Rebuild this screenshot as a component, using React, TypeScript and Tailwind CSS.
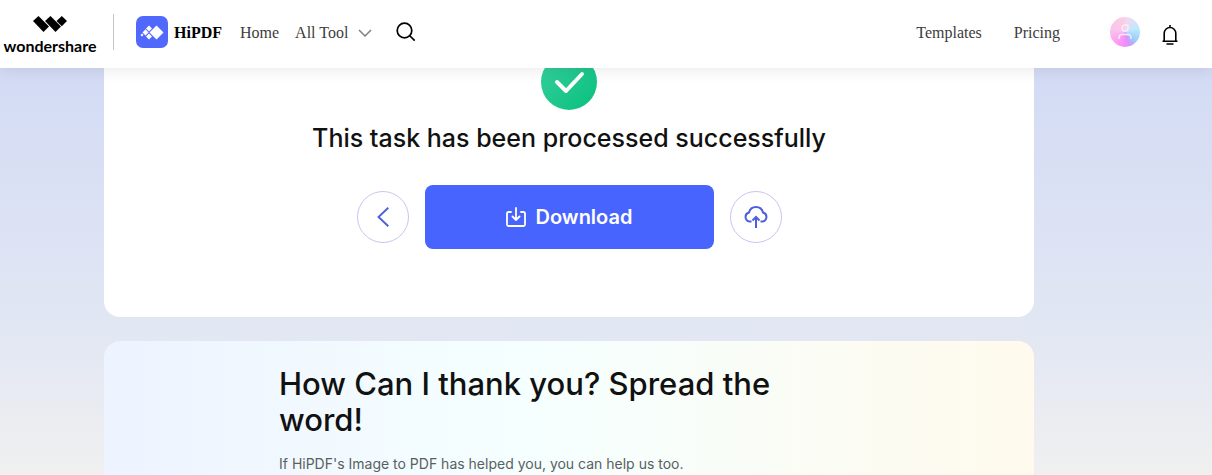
const WondershareLogo = () => (
    <a href="#" className="mt-1.5 flex w-[92px] flex-col items-center gap-1.5 text-black">
        <svg className="h-4 w-[34px]" viewBox="0 0 34 16" fill="currentColor" aria-hidden="true">
            <path d="M0 5 5.500 0 16 10.500 10.500 16Z" />
            <path d="M12 5 17.500 0 28 10.500 22.500 16Z" />
            <path d="M23.500 5 28.800 0 34 5 28.800 10.200Z" />
        </svg>
        <span className="font-['Lato',sans-serif] text-base leading-4 font-bold">wondershare</span>
    </a>
);

const HiPdfLogo = () => (
    <a href="#" className="flex items-center gap-1.5 text-black">
        <svg className="size-8" viewBox="0 0 32 32" aria-hidden="true">
            <rect width="32" height="32" rx="7" fill="#5068fb" />
            <g fill="#fff">
                <path d="M20.500 9.500 27.500 16.500 20.500 23.500 13.500 16.500Z" />
                <path d="M13 9.500 16 12.500 13 15.500 10 12.500Z" />
                <path d="M13 17.500 16 20.500 13 23.500 10 20.500Z" />
                <path d="M9.500 13.300 12.500 16.500 9.500 19.500 6.500 16.500Z" />
                <path d="M6 17.500 7.500 19 6 20.500 4.500 19Z" />
            </g>
        </svg>
        <span className="pt-0.5 text-base font-bold">HiPDF</span>
    </a>
);

const Header = () => (
    <header className="sticky top-0 z-10 flex h-[68px] items-center justify-between bg-white pr-[34px] pl-1 font-['Liberation_Serif',serif] text-base text-[#3c3c3c] shadow-[0_2px_14px_rgba(0,0,0,0.09)]">
        <div className="flex h-full items-center pb-1">
            <WondershareLogo />
            <div className="mr-[22px] ml-[17px] h-9 w-px bg-[#c4c4c4]"></div>
            <HiPdfLogo />
            <nav className="ml-[18px] flex items-center gap-4 pt-0.5">
                <a href="#">Home</a>
                <button type="button" className="flex items-center gap-2.5">
                    All Tool
                    <svg className="h-2 w-3.5" viewBox="0 0 14 8" fill="none" stroke="#808080" strokeWidth="1.500" aria-hidden="true">
                        <path d="M1 1 7 7 13 1" />
                    </svg>
                </button>
            </nav>
            <button type="button" aria-label="Search" className="ml-6 text-black">
                <svg className="size-5" viewBox="0 0 20 20" fill="none" stroke="currentColor" strokeWidth="1.700" aria-hidden="true">
                    <circle cx="8.500" cy="8.500" r="7.300" />
                    <path d="M13.500 13.500 18.700 18.700" />
                </svg>
            </button>
        </div>
        <div className="flex h-full items-center pb-1">
            <nav className="flex items-center gap-8 pt-0.5">
                <a href="#">Templates</a>
                <a href="#">Pricing</a>
            </nav>
            <button
                type="button"
                aria-label="Account"
                className="mr-[22px] ml-[50px] flex size-[30px] items-center justify-center rounded-full bg-[conic-gradient(from_0deg,#f9d5f0,#bfeafb_20%,#9ccffb_35%,#c99cfb_44%,#fb8cf5_52%,#fba8f0_65%,#f8c4ee_78%,#fbcfe0)]"
            >
                <svg className="size-4" viewBox="0 0 16 16" fill="none" stroke="#ffe8fc" strokeWidth="1.500" aria-hidden="true">
                    <path d="M5 4a3 3 0 0 1 3-3h3v3a3 3 0 0 1-6 0Z" />
                    <path d="M2 15v-1.500a3 3 0 0 1 3-3h6a3 3 0 0 1 3 3V15" />
                </svg>
            </button>
            <button type="button" aria-label="Notifications" className="mt-1.5 text-black">
                <svg className="h-5 w-4" viewBox="0 0 16 20" fill="none" stroke="currentColor" strokeWidth="1.600" aria-hidden="true">
                    <path d="M8 0v2.500M.5 16.200h15M2.200 16V8.300a5.800 5.800 0 0 1 11.600 0V16M4.500 19h7" />
                </svg>
            </button>
        </div>
    </header>
);

export default function App() {
    return (
        <div className="flex min-h-screen flex-col bg-linear-to-b from-[#cfd8f5] via-[#e2e7f3] via-70% to-[#f0f0f0] font-['Inter',sans-serif] text-[#111]">
            <Header />
            <main className="flex flex-1 flex-col gap-6 pr-[178px] pl-[104px]">
                <section className="-mt-3.5 flex flex-col items-center rounded-b-2xl bg-white pb-[68px]">
                    <svg className="size-14" viewBox="0 0 56 56" aria-hidden="true">
                        <defs>
                            <linearGradient id="success" x1="0" y1="0" x2="1" y2="1">
                                <stop offset="0" stopColor="#38d0a0" />
                                <stop offset="1" stopColor="#08c07c" />
                            </linearGradient>
                        </defs>
                        <circle cx="28" cy="28" r="28" fill="url(#success)" />
                        <path d="M16 28 25 37 41 20" fill="none" stroke="#fff" strokeWidth="4" strokeLinecap="round" strokeLinejoin="round" />
                    </svg>
                    <h1 className="mt-3 text-[25px] leading-8 font-medium">This task has been processed successfully</h1>
                    <div className="mt-[31px] flex items-center gap-4">
                        <button type="button" aria-label="Back" className="flex size-[52px] items-center justify-center rounded-full border border-[#c9c6f0] text-[#4f5fdc]">
                            <svg className="h-5 w-3" viewBox="0 0 12 20" fill="none" stroke="currentColor" strokeWidth="1.900" aria-hidden="true">
                                <path d="M11.300 .700 1.500 10 11.300 19.300" />
                            </svg>
                        </button>
                        <button type="button" className="flex h-16 w-[289px] items-center justify-center gap-2.5 rounded-lg bg-[#4864ff] text-xl font-semibold text-white">
                            <svg className="size-5" viewBox="0 0 20 20" fill="none" stroke="currentColor" strokeWidth="1.800" strokeLinecap="round" strokeLinejoin="round" aria-hidden="true">
                                <path d="M5 5H2.500A1.500 1.500 0 0 0 1 6.500v11A1.500 1.500 0 0 0 2.500 19h15a1.500 1.500 0 0 0 1.500-1.500v-11A1.500 1.500 0 0 0 17.500 5H15M10 1v11.500M6.500 9.500 10 13l3.500-3.500" />
                            </svg>
                            Download
                        </button>
                        <button type="button" aria-label="Save to cloud" className="flex size-[52px] items-center justify-center rounded-full border border-[#c9c6f0] text-[#4f5fdc]">
                            <svg className="size-6" viewBox="0 0 24 24" fill="none" stroke="currentColor" strokeWidth="2" aria-hidden="true">
                                <path d="M7.500 16.500H5.500A4.600 4.600 0 0 1 5 7.500 7.200 7.200 0 0 1 19 7.500 4.600 4.600 0 0 1 18.500 16.500h-2M12 23V12.500M8.500 15.500 12 12 15.500 15.500" />
                            </svg>
                        </button>
                    </div>
                </section>
                <section className="flex-1 rounded-t-2xl bg-linear-to-r from-[#edf3ff] via-[#f5ffff] via-45% to-[#fffaed] px-[175px] pt-[25px]">
                    <h2 className="text-[31px] leading-9 font-medium">How Can I thank you? Spread the word!</h2>
                    <p className="mt-4 text-sm text-[#5a5f61]">If HiPDF's Image to PDF has helped you, you can help us too.</p>
                </section>
            </main>
        </div>
    );
}
